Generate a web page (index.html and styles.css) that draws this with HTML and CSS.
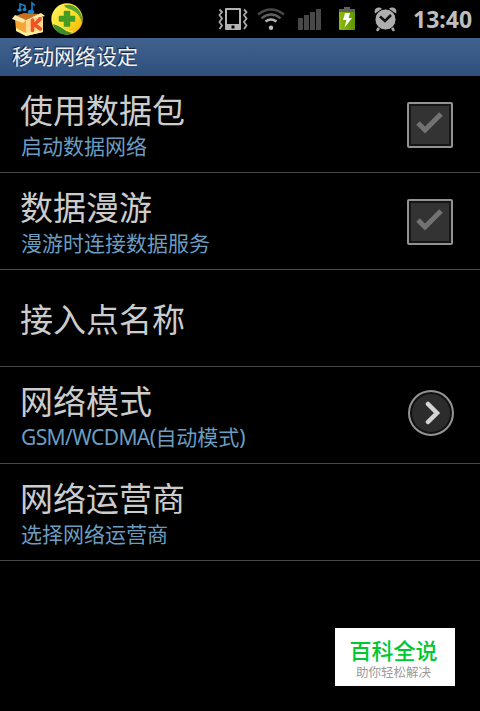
FILE: index.html
```html
<!DOCTYPE html>
<html lang="zh-CN">
<head>
  <meta charset="UTF-8">
  <title>移动网络设定</title>
  <meta name="viewport" content="width=device-width, initial-scale=1">
  <link rel="stylesheet" href="styles.css">
</head>
<body>

  <header class="status-bar">
    <div class="notifications">
      <!-- music box -->
      <svg class="icon" width="36" height="38" viewBox="0 0 36 38">
        <path d="M9 9V4l5 1.500v4M21 11V3l3 2.500" fill="none" stroke="#1685c8" stroke-width="1.600"/>
        <ellipse cx="8.500" cy="10" rx="2.200" ry="1.600" fill="#178bd0"/>
        <ellipse cx="13.500" cy="9.500" rx="2" ry="1.500" fill="#178bd0"/>
        <path d="M4 16l9-3 17 1-15 6z" fill="#c9701c"/>
        <ellipse cx="20" cy="12" rx="3.200" ry="2.200" fill="#178bd0"/>
        <path d="M4 19l11 1v16L5 30z" fill="#f7a636"/>
        <path d="M15 20l17-3v15l-17 4z" fill="#ffd98c"/>
        <path d="M4 15l11 5-3 3-11-4z" fill="#ffe8ab"/>
        <path d="M30 13l4 3-15 4h-4z" fill="#ffe7ae"/>
        <path d="M5 28l10 5v3L5 31zM15 33l17-4v3l-17 4z" fill="#fff09a"/>
        <path d="M21.500 20v10.500M29 19l-5.500 5.500 6 4.500" fill="none" stroke="#f05324" stroke-width="3.600" stroke-linecap="round"/>
      </svg>
      <!-- security -->
      <svg class="icon" width="32" height="38" viewBox="0 0 32 38">
        <defs>
          <linearGradient id="gold" x1="0" y1="0" x2="1" y2="1">
            <stop offset="0" stop-color="#fff36a"/>
            <stop offset=".55" stop-color="#ffdf24"/>
            <stop offset="1" stop-color="#eeaa05"/>
          </linearGradient>
        </defs>
        <circle cx="16" cy="19" r="15.700" fill="url(#gold)"/>
        <path d="M13 5.500C23 2 33 12 31 23 29 15 25 11 18 9 15.500 8 14 7 13 5.500z" fill="#56a42d"/>
        <path d="M2 24c4 1 6 2 9 4 3 2 5 4 10 5C13 37 4 33 2 24z" fill="#388f2a"/>
        <path d="M2 23.500c5 1 7 2.500 10 4.500 3 2 6 3.500 10 4" fill="none" stroke="#e9ef6c" stroke-width="1"/>
        <path d="M13.500 11.500h5v5h5v4.500h-5v5h-5v-5h-5v-4.500h5z" fill="#459b24" stroke="#459b24" stroke-width="1.500" stroke-linejoin="round"/>
      </svg>
    </div>

    <div class="indicators">
      <!-- vibrate -->
      <svg class="icon" width="30" height="38" viewBox="0 0 30 38">
        <path d="M8 8h14q1 0 1 1v20q0 1-1 1H8q-1 0-1-1V9q0-1 1-1zm1 2v14h12V10zm4.500 15.500v3h3v-3z" fill="#b4b4b4" fill-rule="evenodd"/>
        <path d="M1.500 9.500L4 12 1.500 15 4 18.500 1.500 22 4 25.500 1.500 29M26 9.500l2.500 2.500-2.500 3 2.500 3.500L26 22l2.500 3.500L26 29" fill="none" stroke="#aaa" stroke-width="1.800"/>
      </svg>
      <!-- wifi -->
      <svg class="icon wifi" width="28" height="38" viewBox="0 0 28 38">
        <path d="M1 14.500q13-10 26 0" fill="none" stroke="#484848" stroke-width="2.300"/>
        <path d="M4.500 18.300q9.500-7.500 19 0" fill="none" stroke="#606060" stroke-width="2.300"/>
        <path d="M8.500 21.500q5.500-4 11 0" fill="none" stroke="#b0b0b0" stroke-width="2.400"/>
        <circle cx="14" cy="27.700" r="2.200" fill="#bdbdbd"/>
      </svg>
      <!-- signal -->
      <svg class="icon signal" width="23" height="38" viewBox="0 0 23 38">
        <path d="M0 18h5v12H0zM6 15h5v15H6zM12 12h5v18h-5zM18 9h5v21h-5z" fill="#484848"/>
      </svg>
      <!-- battery -->
      <svg class="icon battery" width="18" height="38" viewBox="0 0 18 38">
        <defs>
          <linearGradient id="charge" x1="0" y1="0" x2="1" y2="0">
            <stop offset="0" stop-color="#91bb0c"/>
            <stop offset="1" stop-color="#5c9800"/>
          </linearGradient>
        </defs>
        <path d="M6 7h6v2h5v4H1V9h5z" fill="#606060"/>
        <path d="M1 12h16v17q0 1-1 1H2q-1 0-1-1z" fill="url(#charge)"/>
        <path d="M7 13h5l-1.500 5H14L6.500 27.500 8.500 20H5z" fill="#fff"/>
      </svg>
      <!-- alarm -->
      <svg class="icon alarm" width="24" height="38" viewBox="0 0 24 38">
        <path d="M1 13.500C-1 8 5 6 8 9zM22 13.500C24 8 18 6 15 9z" fill="#a9a9a9"/>
        <path d="M5.500 27l-2 3M17.500 27l2 3" stroke="#a9a9a9" stroke-width="2.600" stroke-linecap="round"/>
        <circle cx="11.500" cy="19.500" r="10.500" fill="#aeaeae" stroke="#000" stroke-width=".8"/>
        <path d="M6 16.500l5 4.500 6-6" fill="none" stroke="#111" stroke-width="2.600"/>
      </svg>
      <span class="clock">13:40</span>
    </div>
  </header>

  <h1 class="title-bar">移动网络设定</h1>

  <ul class="settings">
    <li class="row">
      <div class="label">
        <h2>使用数据包</h2>
        <p>启动数据网络</p>
      </div>
      <span class="checkbox">
        <svg width="28" height="24" viewBox="0 0 28 24">
          <path d="M2 12l7 7L25 3" fill="none" stroke="#727272" stroke-width="5"/>
        </svg>
      </span>
    </li>
    <li class="row">
      <div class="label">
        <h2>数据漫游</h2>
        <p>漫游时连接数据服务</p>
      </div>
      <span class="checkbox">
        <svg width="28" height="24" viewBox="0 0 28 24">
          <path d="M2 12l7 7L25 3" fill="none" stroke="#727272" stroke-width="5"/>
        </svg>
      </span>
    </li>
    <li class="row single">
      <div class="label">
        <h2>接入点名称</h2>
      </div>
    </li>
    <li class="row">
      <div class="label">
        <h2>网络模式</h2>
        <p><span class="latin">GSM/WCDMA(</span>自动模式)</p>
      </div>
      <span class="more">
        <svg width="16" height="24" viewBox="0 0 16 24">
          <path d="M3 3l9 9-9 9" fill="none" stroke="#d4d4d4" stroke-width="4.500" stroke-linecap="round"/>
        </svg>
      </span>
    </li>
    <li class="row">
      <div class="label">
        <h2>网络运营商</h2>
        <p>选择网络运营商</p>
      </div>
    </li>
  </ul>

  <div class="badge">
    <strong>百科全说</strong>
    <span>助你轻松解决</span>
  </div>

</body>
</html>
```

FILE: styles.css
```css
* {
  box-sizing: border-box;
}

body {
  margin: 0;
  height: 711px;
  overflow: hidden;
  background-color: #000;
  color: #ccc;
  font-family: "Noto Sans", "Noto Sans CJK SC", sans-serif;
}

h1, h2, p, ul {
  margin: 0;
  padding: 0;
  font-weight: normal;
}

svg {
  display: block;
}

.status-bar {
  display: flex;
  justify-content: space-between;
  height: 38px;
  padding: 0 8px 0 11px;
}

.notifications {
  display: flex;
  gap: 4px;
}

.indicators {
  display: flex;
}

.wifi {
  margin-left: 9px;
}

.signal {
  margin-left: 13px;
}

.battery {
  margin-left: 17px;
}

.alarm {
  margin-left: 18px;
}

.clock {
  width: 59px;
  margin-left: 15px;
  font-size: 23px;
  font-weight: bold;
  line-height: 39px;
  color: #bebebe;
}

.title-bar {
  height: 38px;
  padding-left: 12px;
  background: linear-gradient(#41628f, #2f4f7c);
  color: #f0f0f0;
  font-size: 21px;
  line-height: 37px;
  text-shadow: -1px -1px 1px #15243b;
}

.settings {
  list-style: none;
}

.row {
  display: flex;
  align-items: center;
  justify-content: space-between;
  height: 97px;
  padding: 0 27px 0 21px;
  border-bottom: 1px solid #484848;
}

.single {
  padding-top: 4px;
}

.label h2 {
  margin-left: -1px;
  font-size: 33px;
  line-height: 44px;
}

.label p {
  color: #6b9dc2;
  font-size: 21px;
  line-height: 26px;
}

.latin {
  letter-spacing: -0.6px;
}

.checkbox {
  display: flex;
  align-items: center;
  justify-content: center;
  width: 46px;
  height: 46px;
  margin-top: 2px;
  padding-bottom: 4px;
  border: 2px solid #929292;
  border-radius: 2px;
  background-color: #333;
  box-shadow: inset 0 0 0 2px #151515;
}

.more {
  display: flex;
  align-items: center;
  justify-content: center;
  width: 46px;
  height: 46px;
  margin: 0 -1px 4px 0;
  padding-left: 4px;
  border: 2px solid #929292;
  border-radius: 50%;
  background-color: #2c2c2c;
  box-shadow: inset 0 0 0 2px #111;
}

.badge {
  display: flex;
  flex-direction: column;
  align-items: center;
  width: 120px;
  height: 58px;
  margin: 67px 25px 0 auto;
  padding: 8px 3px 0 0;
  background-color: #fff;
}

.badge strong {
  color: #00c832;
  font-size: 22px;
  font-weight: 500;
  line-height: 28px;
}

.badge span {
  color: #999;
  font-size: 12.5px;
  line-height: 18px;
}
```
